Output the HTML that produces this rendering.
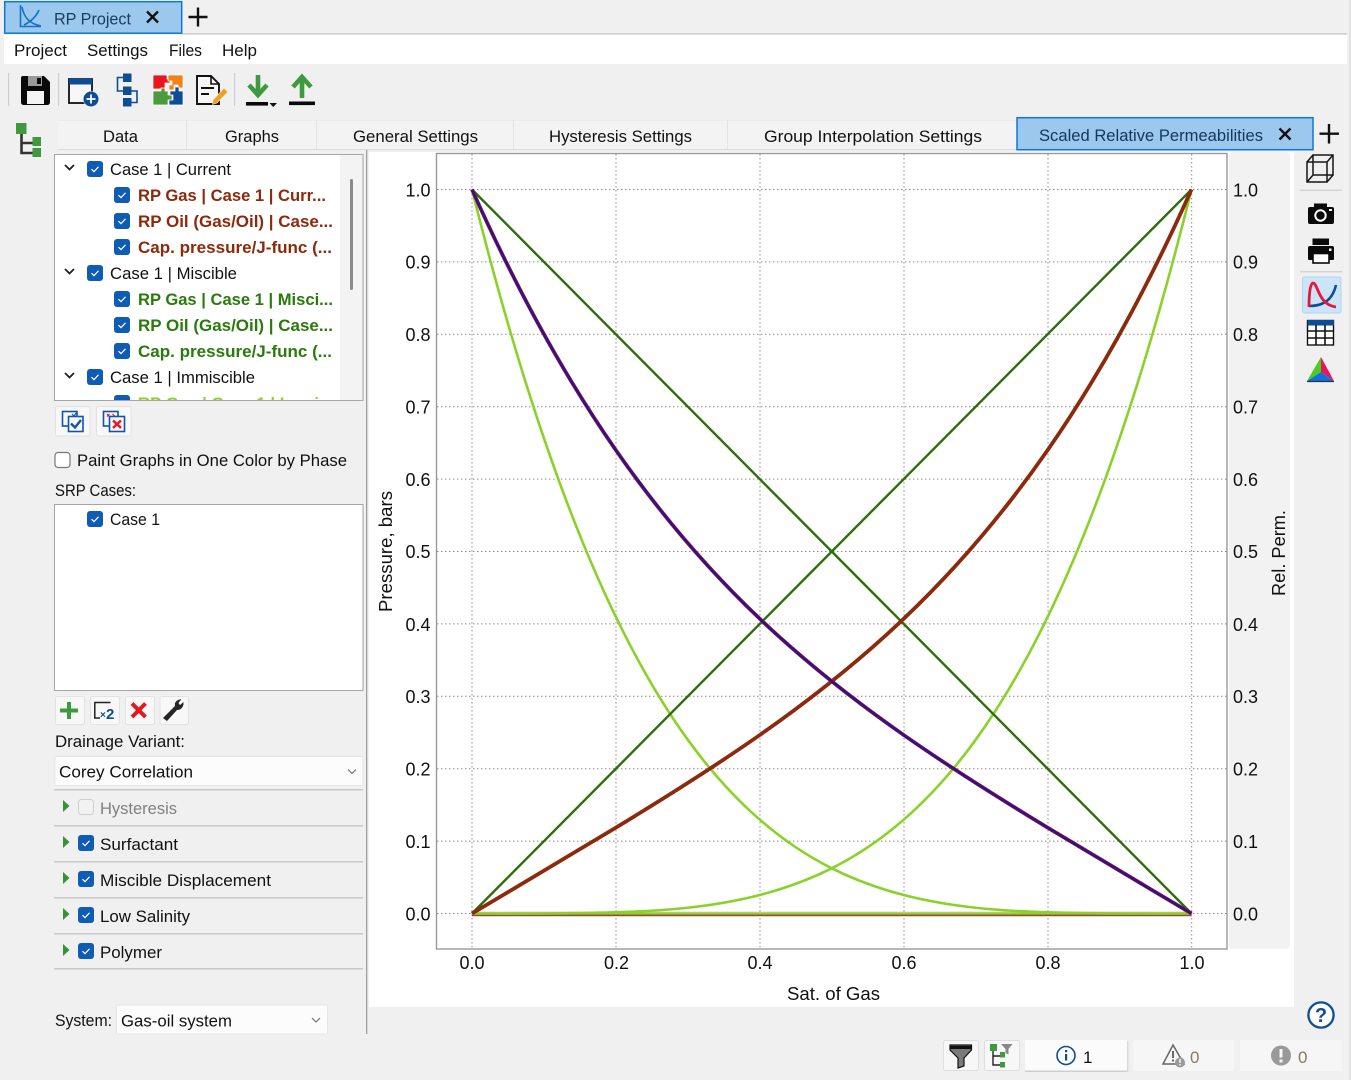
<!DOCTYPE html>
<html><head><meta charset="utf-8"><title>RP Project</title>
<style>
html,body{margin:0;padding:0;background:#f0f0f0;width:1351px;height:1080px;overflow:hidden}
svg{display:block;position:absolute;left:0;top:0}
text{font-family:"Liberation Sans",sans-serif;font-size:16.5px;fill:#111}
.b{font-weight:bold}
.a{font-size:18px;fill:#111}
.g{fill:none;stroke:#8c8c8c;stroke-width:1;stroke-dasharray:1.5 2.5}
</style></head><body>
<svg width="1351" height="1080" viewBox="0 0 1351 1080" xmlns="http://www.w3.org/2000/svg">
<defs>
<g id="cb"><rect x="0" y="0" width="16" height="16" rx="3" fill="#0f5cb4"/><path d="M4.5 8.2 7 10.6 11.5 5.8" fill="none" stroke="#fff" stroke-width="1.2"/></g>
<g id="cv"><path d="M0 0 4.5 4.5 9 0" fill="none" stroke="#222" stroke-width="1.8"/></g>
<g id="tr"><path d="M0 0 6.5 6 0 12Z" fill="#3a8f3a"/></g>
<path id="p4" d="M472 913.5C520 913.5 567.9 913.8 615.9 912.3C663.9 910.8 711.8 907.4 759.8 895C807.8 882.6 855.7 861.4 903.7 819.7C951.7 778 999.6 715.9 1047.6 617C1095.6 518.1 1143.5 382.6 1191.5 189.5" fill="none" stroke-linejoin="round"/>
<path id="pm" d="M472 913.5C520 885.02 567.9 856.71 615.9 827.6C663.9 798.49 711.8 768.55 759.8 735C807.8 701.45 855.7 664.37 903.7 618.8C951.7 573.23 999.6 519.21 1047.6 450.2C1095.6 381.19 1143.5 297.14 1191.5 189.5" fill="none" stroke-linejoin="round"/>
</defs>

<!-- background -->
<rect width="1351" height="1080" fill="#f0f0f0"/>
<rect x="1349" y="0" width="2" height="1080" fill="#e2e2e2"/>

<!-- title bar -->
<rect x="182" y="33" width="1165" height="1.5" fill="#cfcfcf"/>
<rect x="4.7" y="1.7" width="177" height="31.5" fill="#9bc8ec" stroke="#0c79d8" stroke-width="1.5"/>
<path d="M20.5 5V26.5H41" fill="none" stroke="#1470c8" stroke-width="1.6"/>
<path d="M22 7C24 18 30 24 41 26M24 25C30 22 36 17 39 10" fill="none" stroke="#1470c8" stroke-width="1.6"/>
<text x="54" y="24.5" textLength="77" lengthAdjust="spacingAndGlyphs" fill="#1c3d5c" style="fill:#1c3d5c">RP Project</text>
<path d="M147 11.5 158 22.5M158 11.5 147 22.5" stroke="#111" stroke-width="2.4"/>
<path d="M198 7.5V26.5M188.5 17H207.5" stroke="#111" stroke-width="2.4"/>

<!-- menu -->
<rect x="4" y="35" width="1343" height="29" fill="#fff"/>
<text x="14" y="56" textLength="53" lengthAdjust="spacingAndGlyphs">Project</text>
<text x="87" y="56" textLength="61" lengthAdjust="spacingAndGlyphs">Settings</text>
<text x="169" y="56" textLength="33" lengthAdjust="spacingAndGlyphs">Files</text>
<text x="222" y="56" textLength="35" lengthAdjust="spacingAndGlyphs">Help</text>

<!-- toolbar -->
<rect x="8" y="73" width="1.2" height="33" fill="#cdcdcd"/>
<rect x="58" y="73" width="1.2" height="33" fill="#cdcdcd"/>
<rect x="234" y="73" width="1.2" height="33" fill="#cdcdcd"/>
<!-- save -->
<path d="M23 76H44L50 82V102Q50 105 47 105H24Q21 105 21 102V78Q21 76 23 76Z" fill="#0a0a0a"/>
<rect x="28" y="76" width="14" height="10" fill="#9a9a9a"/><rect x="37" y="78" width="4" height="6" fill="#0a0a0a"/>
<rect x="27" y="91" width="17" height="13" fill="#f4f4f4"/>
<!-- window plus -->
<rect x="69" y="79" width="23" height="24" fill="#f7f7f7" stroke="#111" stroke-width="1.8"/>
<rect x="69" y="78.5" width="23" height="6" fill="#0f4c96"/>
<circle cx="91" cy="99" r="8" fill="#f0f0f0"/>
<circle cx="91" cy="99" r="7.5" fill="#0f4c96"/><path d="M91 94.5V103.5M86.5 99H95.5" stroke="#fff" stroke-width="1.8"/>
<!-- flow -->
<path d="M123 77.5H117.5V91H123M131 91H137V102.5H131" fill="none" stroke="#0f4c96" stroke-width="1.6"/>
<rect x="123" y="73.5" width="8.5" height="8.5" fill="#0f4c96"/><rect x="123" y="86.5" width="8.5" height="8.5" fill="#0f4c96"/><rect x="123" y="98" width="8.5" height="8.5" fill="#0f4c96"/>
<!-- puzzle -->
<g stroke="#fff" stroke-width=".7">
<path d="M153 75H167V79H170V83H165V89H153Z" fill="#e8171f"/>
<path d="M168 75H183V88H178V85H174V90H169V85H172V81H168Z" fill="#f08218"/>
<path d="M153 91H161V88H165V91H168V95H172V100H168V105H153Z" fill="#4d9a3e"/>
<path d="M169 105V100H173V95H170V91H175V87H179V91H183V105Z" fill="#0f4c96"/>
</g>
<!-- doc -->
<path d="M197 76H211L219 84V104H197Z" fill="#f7f7f7" stroke="#111" stroke-width="1.9"/>
<path d="M211 76V84H219" fill="none" stroke="#111" stroke-width="1.6"/>
<path d="M201 88H214M201 94H209" stroke="#111" stroke-width="2"/>
<path d="M213 100 224 88 228 92 217 103 212.5 104.5Z" fill="#f0a020" stroke="#f0f0f0" stroke-width=".6"/>
<!-- download -->
<path d="M258 75V94M249 85 258 95 267 85" fill="none" stroke="#3f9a3f" stroke-width="4.6"/>
<rect x="246" y="102" width="22" height="3.6" fill="#0a0a0a"/><path d="M269.5 103H277L273.2 107Z" fill="#111"/>
<!-- upload -->
<path d="M302 98V77M293 87 302 77 311 87" fill="none" stroke="#3f9a3f" stroke-width="4.6"/>
<rect x="289" y="101.5" width="26" height="3.6" fill="#0a0a0a"/>

<!-- tree toggle icon -->
<path d="M21.5 133V153H33M21.5 143H33" fill="none" stroke="#333" stroke-width="2.6"/>
<rect x="16" y="123" width="10.5" height="11" fill="#3f9a3f"/><rect x="32.5" y="137" width="8.5" height="9" fill="#3f9a3f"/><rect x="32.5" y="148" width="8.5" height="9" fill="#3f9a3f"/>

<!-- tab bar -->
<rect x="58" y="120" width="959" height="29" fill="#f3f3f3"/>
<rect x="58" y="120" width="959" height="1" fill="#ebebeb"/>
<rect x="58" y="149" width="959" height="1" fill="#dcdcdc"/>
<rect x="186" y="120" width="1" height="29" fill="#e3e3e3"/><rect x="316" y="120" width="1" height="29" fill="#e3e3e3"/><rect x="513" y="120" width="1" height="29" fill="#e3e3e3"/><rect x="727" y="120" width="1" height="29" fill="#e3e3e3"/>
<text x="103" y="142" textLength="35" lengthAdjust="spacingAndGlyphs">Data</text>
<text x="225" y="142" textLength="54" lengthAdjust="spacingAndGlyphs">Graphs</text>
<text x="353" y="142" textLength="125" lengthAdjust="spacingAndGlyphs">General Settings</text>
<text x="549" y="142" textLength="143" lengthAdjust="spacingAndGlyphs">Hysteresis Settings</text>
<text x="764" y="142" textLength="218" lengthAdjust="spacingAndGlyphs">Group Interpolation Settings</text>
<rect x="1017" y="117.7" width="296" height="32" fill="#9bc8ec" stroke="#0c79d8" stroke-width="1.5"/>
<text x="1039" y="141" textLength="224" lengthAdjust="spacingAndGlyphs" style="fill:#14385a">Scaled Relative Permeabilities</text>
<path d="M1279.5 128.5 1290.5 139.5M1290.5 128.5 1279.5 139.5" stroke="#111" stroke-width="2.4"/>
<path d="M1329 124V143.5M1319.5 133.7H1339" stroke="#111" stroke-width="2.4"/>

<!-- tree panel -->
<rect x="54.5" y="154.5" width="308.5" height="246" fill="#fff" stroke="#a6a6a6"/>
<rect x="340" y="155" width="22.5" height="245" fill="#f3f3f3"/>
<rect x="350" y="179" width="3" height="111" rx="1.5" fill="#8a8a8a"/>
<svg x="55" y="155" width="285" height="245" viewBox="55 155 285 245">
<use href="#cv" x="65" y="165"/><use href="#cb" x="87" y="161"/><text x="110" y="175" textLength="121" lengthAdjust="spacingAndGlyphs">Case 1 | Current</text>
<use href="#cb" x="114" y="187"/><text class="b" x="138" y="201" textLength="188" lengthAdjust="spacingAndGlyphs" style="fill:#8c2a0d">RP Gas | Case 1 | Curr...</text>
<use href="#cb" x="114" y="213"/><text class="b" x="138" y="227" textLength="195" lengthAdjust="spacingAndGlyphs" style="fill:#8c2a0d">RP Oil (Gas/Oil) | Case...</text>
<use href="#cb" x="114" y="239"/><text class="b" x="138" y="253" textLength="194" lengthAdjust="spacingAndGlyphs" style="fill:#8c2a0d">Cap. pressure/J-func (...</text>
<use href="#cv" x="65" y="269"/><use href="#cb" x="87" y="265"/><text x="110" y="279" textLength="127" lengthAdjust="spacingAndGlyphs">Case 1 | Miscible</text>
<use href="#cb" x="114" y="291"/><text class="b" x="138" y="305" textLength="195" lengthAdjust="spacingAndGlyphs" style="fill:#2a7a0c">RP Gas | Case 1 | Misci...</text>
<use href="#cb" x="114" y="317"/><text class="b" x="138" y="331" textLength="195" lengthAdjust="spacingAndGlyphs" style="fill:#2a7a0c">RP Oil (Gas/Oil) | Case...</text>
<use href="#cb" x="114" y="343"/><text class="b" x="138" y="357" textLength="194" lengthAdjust="spacingAndGlyphs" style="fill:#2a7a0c">Cap. pressure/J-func (...</text>
<use href="#cv" x="65" y="373"/><use href="#cb" x="87" y="369"/><text x="110" y="383" textLength="145" lengthAdjust="spacingAndGlyphs">Case 1 | Immiscible</text>
<use href="#cb" x="114" y="395"/><text class="b" x="138" y="409" textLength="195" lengthAdjust="spacingAndGlyphs" style="fill:#8ad22a">RP Gas | Case 1 | Immi...</text>
</svg>

<!-- check/uncheck buttons -->
<rect x="55.5" y="406.5" width="34.5" height="29.5" rx="2" fill="#f8f8f8" stroke="#e2e2e2"/>
<rect x="96.5" y="406.5" width="34.5" height="29.5" rx="2" fill="#f8f8f8" stroke="#e2e2e2"/>
<rect x="62.5" y="411.5" width="14.5" height="14.5" fill="none" stroke="#1254a8" stroke-width="1.6"/>
<path d="M72 414 74 416 77 412" fill="none" stroke="#1254a8" stroke-width="1.2"/>
<rect x="68.5" y="416.5" width="14.5" height="15" fill="#f8f8f8" stroke="#1254a8" stroke-width="1.6"/>
<path d="M71 423.5 75 427.5 81 420" fill="none" stroke="#1254a8" stroke-width="2.4"/>
<rect x="103.5" y="411.5" width="14.5" height="14.5" fill="none" stroke="#1254a8" stroke-width="1.6"/>
<path d="M107 414 109.5 416.5M109.5 414 107 416.5M112.5 414 115 416.5" stroke="#e8171f" stroke-width="1.2"/>
<rect x="109.5" y="416.5" width="15" height="15" fill="#f8f8f8" stroke="#1254a8" stroke-width="1.6"/>
<path d="M113 420.5 121 428M121 420.5 113 428" fill="none" stroke="#e8171f" stroke-width="2.4"/>

<!-- paint checkbox -->
<rect x="55" y="452.5" width="15" height="15" rx="3" fill="#fff" stroke="#777" stroke-width="1.2"/>
<text x="77" y="466" textLength="270" lengthAdjust="spacingAndGlyphs">Paint Graphs in One Color by Phase</text>
<text x="55" y="496" textLength="81" lengthAdjust="spacingAndGlyphs">SRP Cases:</text>

<!-- SRP list -->
<rect x="54.5" y="504.5" width="308.5" height="186" fill="#fff" stroke="#a6a6a6"/>
<use href="#cb" x="87" y="511"/><text x="110" y="525" textLength="50" lengthAdjust="spacingAndGlyphs">Case 1</text>

<!-- tool buttons -->
<rect x="55.5" y="696.5" width="29" height="28" rx="2" fill="#f8f8f8" stroke="#e2e2e2"/>
<rect x="90.5" y="696.5" width="29" height="28" rx="2" fill="#f8f8f8" stroke="#e2e2e2"/>
<rect x="125.5" y="696.5" width="29" height="28" rx="2" fill="#f8f8f8" stroke="#e2e2e2"/>
<rect x="160" y="696.5" width="28.5" height="28" rx="2" fill="#f8f8f8" stroke="#e2e2e2"/>
<path d="M69 702V719M60 710.5H78" stroke="#3f9a3f" stroke-width="4"/>
<path d="M94.8 717.5V702.5H110.5" fill="none" stroke="#222" stroke-width="1.5"/>
<path d="M100 718H94" stroke="#222" stroke-width="1.5"/>
<text x="100" y="718" style="font-size:10px;fill:#0f4c96;font-weight:bold">×</text>
<text x="106" y="719" style="font-size:15px;fill:#0f4c96;font-weight:bold">2</text>
<path d="M132 703.5 145.5 717M145.5 703.5 132 717" stroke="#e8171f" stroke-width="4"/>
<path d="M163 718 175 706Q174 702 178 700L181.5 699 178.5 703 180 705 183.5 702Q184 707 180 709.5 177.5 710 177 710L167 721Z" fill="#262626"/>

<!-- drainage -->
<text x="55" y="747" textLength="130" lengthAdjust="spacingAndGlyphs">Drainage Variant:</text>
<rect x="55" y="756.5" width="308" height="29" rx="1" fill="#fcfcfc" stroke="#e6e6e6"/>
<text x="59" y="777.5" textLength="134" lengthAdjust="spacingAndGlyphs">Corey Correlation</text>
<path d="M348 769.5 352 773.5 356 769.5" fill="none" stroke="#666" stroke-width="1"/>

<!-- sections -->
<g fill="#c9c9c9"><rect x="54" y="789" width="309" height="1.5"/><rect x="54" y="825" width="309" height="1.5"/><rect x="54" y="861" width="309" height="1.5"/><rect x="54" y="897" width="309" height="1.5"/><rect x="54" y="933" width="309" height="1.5"/><rect x="54" y="968" width="309" height="1.5"/></g>
<use href="#tr" x="63" y="800"/><rect x="78.5" y="799.5" width="15" height="15" rx="3" fill="#f2f2f2" stroke="#cfcfcf"/><text x="100" y="814" textLength="77" lengthAdjust="spacingAndGlyphs" style="fill:#808080">Hysteresis</text>
<use href="#tr" x="63" y="836"/><use href="#cb" x="78" y="835"/><text x="100" y="850" textLength="78" lengthAdjust="spacingAndGlyphs">Surfactant</text>
<use href="#tr" x="63" y="872"/><use href="#cb" x="78" y="871"/><text x="100" y="886" textLength="171" lengthAdjust="spacingAndGlyphs">Miscible Displacement</text>
<use href="#tr" x="63" y="908"/><use href="#cb" x="78" y="907"/><text x="100" y="922" textLength="90" lengthAdjust="spacingAndGlyphs">Low Salinity</text>
<use href="#tr" x="63" y="944"/><use href="#cb" x="78" y="943"/><text x="100" y="958" textLength="62" lengthAdjust="spacingAndGlyphs">Polymer</text>

<!-- system -->
<text x="55" y="1026" textLength="57" lengthAdjust="spacingAndGlyphs">System:</text>
<rect x="116.5" y="1005" width="211" height="29" rx="1" fill="#fcfcfc" stroke="#e6e6e6"/>
<text x="121" y="1026.5" textLength="111" lengthAdjust="spacingAndGlyphs">Gas-oil system</text>
<path d="M312 1018 316 1022 320 1018" fill="none" stroke="#666" stroke-width="1"/>

<!-- splitter -->
<rect x="366" y="150" width="1.3" height="884" fill="#a0a0a0"/>

<!-- chart -->
<rect x="369" y="152" width="925" height="855" fill="#fff"/>
<rect x="1229" y="152" width="61" height="797" rx="4" fill="#f2f2f2"/>
<rect x="436.5" y="153.5" width="790.5" height="795.5" fill="#fff" stroke="#9a9a9a" stroke-width="1.4"/>
<path class="g" d="M472 154V949M616 154V949M760 154V949M904 154V949M1048 154V949M1191.7 154V949"/>
<path class="g" d="M437 189.5H1227M437 261.9H1227M437 334.3H1227M437 406.7H1227M437 479.1H1227M437 551.5H1227M437 623.9H1227M437 696.3H1227M437 768.7H1227M437 841.1H1227M437 913.5H1227"/>
<!-- baseline -->
<path d="M472 915H1191.5" stroke="#8c2a0d" stroke-width="2.6" fill="none" opacity=".85"/>
<path d="M472 912H1191.5" stroke="#d9c0c0" stroke-width="1.2" fill="none" opacity=".6"/>
<path d="M472 913.5H1191.5" stroke="#8ad22a" stroke-width="2.2" fill="none"/>
<!-- curves -->
<use href="#p4" stroke="#8ad22a" stroke-width="2.6"/>
<use href="#p4" stroke="#8ad22a" stroke-width="2.6" transform="translate(1663.5 0) scale(-1 1)"/>
<path d="M472 913.5 1191.5 189.5M472 189.5 1191.5 913.5" stroke="#2d6e0c" stroke-width="2.4" fill="none"/>
<use href="#pm" stroke="#8c2a0d" stroke-width="3.8"/>
<use href="#pm" stroke="#8c2a0d" stroke-width="3.8" transform="translate(1663.5 0) scale(-1 1)"/>
<use href="#pm" stroke="#3b0a96" stroke-width="2.6" transform="translate(1663.5 0) scale(-1 1)"/>
<!-- left axis labels -->
<text class="a" x="430.5" y="196.5" text-anchor="end">1.0</text>
<text class="a" x="430.5" y="268.5" text-anchor="end">0.9</text>
<text class="a" x="430.5" y="341" text-anchor="end">0.8</text>
<text class="a" x="430.5" y="413.5" text-anchor="end">0.7</text>
<text class="a" x="430.5" y="486" text-anchor="end">0.6</text>
<text class="a" x="430.5" y="558" text-anchor="end">0.5</text>
<text class="a" x="430.5" y="631" text-anchor="end">0.4</text>
<text class="a" x="430.5" y="703" text-anchor="end">0.3</text>
<text class="a" x="430.5" y="775.5" text-anchor="end">0.2</text>
<text class="a" x="430.5" y="848" text-anchor="end">0.1</text>
<text class="a" x="430.5" y="920.5" text-anchor="end">0.0</text>
<!-- right axis labels -->
<text class="a" x="1233" y="196.5">1.0</text>
<text class="a" x="1233" y="268.5">0.9</text>
<text class="a" x="1233" y="341">0.8</text>
<text class="a" x="1233" y="413.5">0.7</text>
<text class="a" x="1233" y="486">0.6</text>
<text class="a" x="1233" y="558">0.5</text>
<text class="a" x="1233" y="631">0.4</text>
<text class="a" x="1233" y="703">0.3</text>
<text class="a" x="1233" y="775.5">0.2</text>
<text class="a" x="1233" y="848">0.1</text>
<text class="a" x="1233" y="920.5">0.0</text>
<!-- x labels -->
<text class="a" x="472" y="969" text-anchor="middle">0.0</text>
<text class="a" x="616.5" y="969" text-anchor="middle">0.2</text>
<text class="a" x="760" y="969" text-anchor="middle">0.4</text>
<text class="a" x="904" y="969" text-anchor="middle">0.6</text>
<text class="a" x="1048" y="969" text-anchor="middle">0.8</text>
<text class="a" x="1192" y="969" text-anchor="middle">1.0</text>
<text class="a" x="787" y="1000" textLength="93" lengthAdjust="spacingAndGlyphs">Sat. of Gas</text>
<text class="a" transform="translate(392 612) rotate(-90)" textLength="121" lengthAdjust="spacingAndGlyphs">Pressure, bars</text>
<text class="a" transform="translate(1285 596) rotate(-90)" textLength="86" lengthAdjust="spacingAndGlyphs">Rel. Perm.</text>

<!-- right toolbar -->
<rect x="1300" y="189.5" width="42" height="1.5" fill="#d4d4d4"/>
<rect x="1300" y="271" width="42" height="1.5" fill="#d4d4d4"/>
<path d="M1307 162H1327V182H1307ZM1313 155H1333V175H1313ZM1307 162 1313 155M1327 162 1333 155M1327 182 1333 175M1307 182 1313 175" fill="none" stroke="#161616" stroke-width="1.5"/>
<!-- camera -->
<path d="M1310 207H1314V203.5H1327V207H1332Q1334 207 1334 209V222Q1334 224 1332 224H1310Q1308 224 1308 222V209Q1308 207 1310 207Z" fill="#0a0a0a"/>
<circle cx="1320.5" cy="215.5" r="5.2" fill="#0a0a0a" stroke="#fff" stroke-width="2"/>
<rect x="1329" y="209" width="3" height="2" fill="#fff"/>
<!-- printer -->
<rect x="1312.5" y="238.5" width="16.5" height="6.5" fill="#0a0a0a"/>
<path d="M1310 246H1332Q1334 246 1334 248V259Q1334 260 1333 260H1309Q1308 260 1308 259V248Q1308 246 1310 246Z" fill="#0a0a0a"/>
<rect x="1329" y="248.5" width="2.5" height="2.5" fill="#fff"/>
<rect x="1313" y="253.5" width="16" height="9.5" fill="#fff" stroke="#0a0a0a" stroke-width="1.6"/>
<!-- active curves -->
<rect x="1302.5" y="277" width="38.5" height="36" rx="2" fill="#cce4f7" stroke="#aed3f3"/>
<path d="M1309 306C1321 306 1332 302 1336 285" fill="none" stroke="#0f4c96" stroke-width="2.6"/>
<path d="M1309 307C1309 295 1310 283 1313 283C1318 283 1318 305 1336 307" fill="none" stroke="#e8173a" stroke-width="2.8"/>
<!-- table -->
<rect x="1307.5" y="320.5" width="26" height="24.5" fill="#fff" stroke="#111" stroke-width="1.4"/>
<rect x="1307.5" y="320" width="26.5" height="5.5" fill="#0f4c96"/>
<path d="M1307 331H1334M1307 338H1334M1316 325V345M1325 325V345" stroke="#111" stroke-width="1.6" fill="none"/>
<!-- triangle -->
<path d="M1321 357 1307 381 1321 372Z" fill="#4dcc1e"/>
<path d="M1321 357 1334 381 1321 372Z" fill="#e8175a"/>
<path d="M1307 381H1334L1321 372Z" fill="#1070e0"/>
<path d="M1307 381.5H1334" stroke="#333" stroke-width="1.2"/>

<!-- help -->
<circle cx="1321" cy="1015" r="12.6" fill="#fff" stroke="#0f4c96" stroke-width="2.3"/>
<text x="1321" y="1022" text-anchor="middle" class="b" style="font-size:20px;fill:#0f4c96">?</text>

<!-- status bar -->
<rect x="943.5" y="1040.5" width="35" height="30" rx="2" fill="#f7f7f7" stroke="#dedede"/>
<rect x="984.5" y="1040.5" width="35" height="30" rx="2" fill="#f7f7f7" stroke="#dedede"/>
<rect x="1025" y="1040" width="102" height="31" rx="1" fill="#fbfbfb"/><rect x="1025" y="1070.5" width="102" height="1.5" fill="#cfcfcf"/><rect x="1127" y="1041" width="1.5" height="31" fill="#dadada"/>
<rect x="1133" y="1040" width="101" height="31" rx="1" fill="#f6f6f6"/>
<rect x="1240" y="1040" width="102" height="31" rx="1" fill="#f6f6f6"/>
<path d="M950 1045H971.5V1050L964 1058V1066L958 1068V1058L950 1050Z" fill="#7a7a7a" stroke="#111" stroke-width="1.2"/>
<path d="M950 1046H971.5V1049H950Z" fill="#111"/>
<path d="M993 1048V1065H1000M993 1056H1000" fill="none" stroke="#222" stroke-width="1.4"/>
<rect x="990" y="1044" width="7" height="7" fill="#3f9a3f"/><rect x="1000" y="1052" width="5" height="5.5" fill="#3f9a3f"/><rect x="1000" y="1062" width="5" height="5.5" fill="#3f9a3f"/>
<path d="M1001 1044H1012.5L1008.5 1049V1054.5L1005.5 1053V1049Z" fill="#888"/>
<circle cx="1066" cy="1055.5" r="9" fill="#fff" stroke="#0f4c96" stroke-width="1.6"/>
<rect x="1065" y="1054" width="2.2" height="6.5" fill="#0f4c96"/><rect x="1065" y="1050" width="2.2" height="2.2" fill="#0f4c96"/>
<text x="1083" y="1063" style="font-size:17px">1</text>
<path d="M1173 1045 1184 1064H1163Z" fill="#f6f6f6" stroke="#666" stroke-width="1.5"/>
<rect x="1172" y="1051" width="2" height="7" fill="#666"/><rect x="1172" y="1059.5" width="2" height="2" fill="#666"/>
<circle cx="1180" cy="1062.5" r="5" fill="#999"/><rect x="1179.3" y="1059" width="1.4" height="4" fill="#fff"/><rect x="1179.3" y="1064" width="1.4" height="1.4" fill="#fff"/>
<text x="1190" y="1063" style="font-size:17px;fill:#8a7a62">0</text>
<circle cx="1281" cy="1055.5" r="10" fill="#999"/>
<rect x="1279.5" y="1049" width="3" height="8.5" fill="#f6f6f6"/><rect x="1279.5" y="1059.5" width="3" height="3" fill="#f6f6f6"/>
<text x="1298" y="1063" style="font-size:17px;fill:#8a7a62">0</text>
</svg>
</body></html>
